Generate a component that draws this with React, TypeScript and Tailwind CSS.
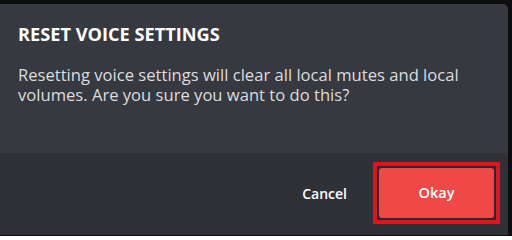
export default function App() {
  return (
    <div className="h-[236px] w-[512px] bg-[#0d0d0f] pt-[4px] pr-[4px] pb-[1px]">
      <div
        className="flex h-full flex-col overflow-hidden rounded-tr-[5px] bg-[#36393f]"
        style={{ fontFamily: '"Open Sans", "Noto Sans", sans-serif' }}
      >
        <div className="h-[149px] px-[18px] pt-[18px]">
          <h2 className="text-[18.2px] font-bold uppercase leading-[24px] text-white">
            Reset Voice Settings
          </h2>
          <p className="mt-[19px] text-[16.6px] leading-[20px] text-[#dcddde]">
            Resetting voice settings will clear all local mutes and local volumes. Are you sure you
            want to do this?
          </p>
        </div>
        <div className="flex flex-1 items-center justify-end bg-[#2f3136] pr-[8px] pb-[2px]">
          <button className="mr-[26px] text-[14px] font-semibold text-white">Cancel</button>
          <div className="h-[62px] w-[127px] border-[4px] border-[#e3131e] bg-[#2a2b2f] p-[2px]">
            <button className="h-full w-full rounded-[3px] bg-[#f04747] text-[14.5px] font-semibold text-white">
              Okay
            </button>
          </div>
        </div>
      </div>
    </div>
  );
}
